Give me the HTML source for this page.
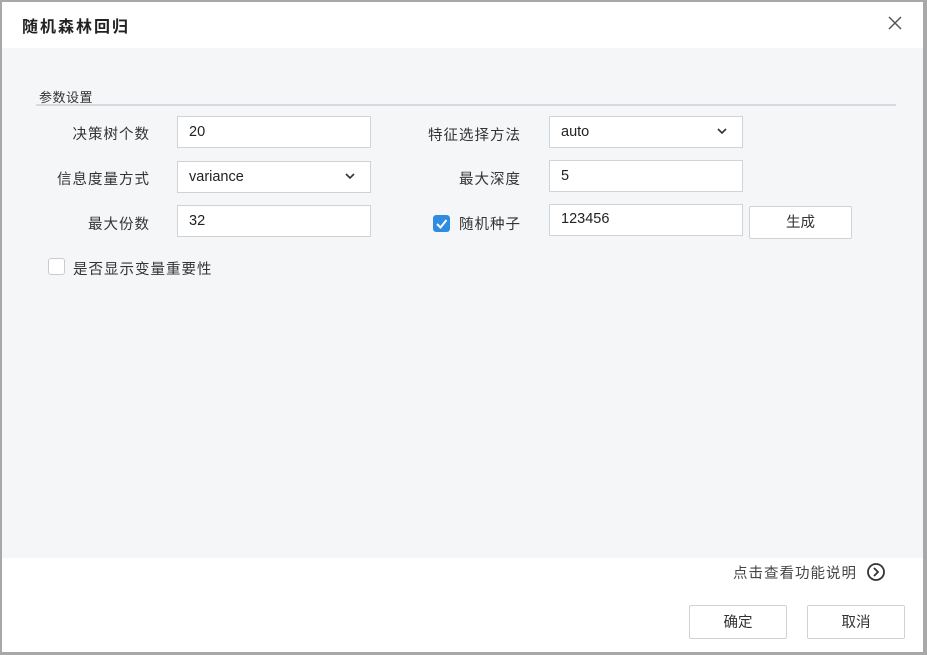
<!DOCTYPE html>
<html><head><meta charset="utf-8"><style>
*{box-sizing:border-box;margin:0;padding:0}
body{width:927px;height:655px;position:relative;background:#fff;font-family:"Liberation Sans","Noto Sans CJK SC",sans-serif;font-size:14px;color:#333;overflow:hidden}
.frame{position:absolute;inset:0;border:2px solid #a8a8a8;border-right-width:4px;border-bottom-width:3px;pointer-events:none}
.title{position:absolute;left:22px;top:13px;font-size:16px;letter-spacing:2px;font-weight:bold;color:#222}
.close{position:absolute;left:886px;top:14px}
.body{position:absolute;left:2px;top:48px;width:921px;height:510px;background:#f5f6f8}
.sec{position:absolute;left:39px;top:87px;font-size:13px;letter-spacing:0.5px;color:#333}
.line{position:absolute;left:36px;top:104px;width:860px;height:2px;background:#d6dae0}
.lbl{position:absolute;font-size:14.5px;letter-spacing:1px;color:#333;text-align:right}
.in{position:absolute;height:32px;background:#fff;border:1px solid #cfd3d8;padding-left:11px;line-height:30px;font-size:14.5px;color:#222}
.arr{position:absolute;right:14px;top:8px}
.cb{position:absolute;width:17px;height:17px;border-radius:3px}
.btn{position:absolute;background:#fff;border:1px solid #cfd3d8;border-radius:2px;text-align:center;font-size:14.5px;color:#333}
</style></head><body>
<div class="title">随机森林回归</div>
<svg class="close" width="18" height="18" viewBox="0 0 18 18"><path d="M3 3L15 15M15 3L3 15" stroke="#555" stroke-width="1.5"/></svg>
<div class="body"></div>
<div class="sec">参数设置</div>
<div class="line"></div>

<div class="lbl" style="left:40px;top:123px;width:110px">决策树个数</div>
<div class="in" style="left:177px;top:116px;width:194px">20</div>
<div class="lbl" style="left:30px;top:168px;width:120px">信息度量方式</div>
<div class="in" style="left:177px;top:161px;width:194px">variance<svg class="arr" width="12" height="12" viewBox="0 0 12 12"><path d="M2 4L6 8L10 4" stroke="#333" stroke-width="1.6" fill="none"/></svg></div>
<div class="lbl" style="left:40px;top:213px;width:110px">最大份数</div>
<div class="in" style="left:177px;top:205px;width:194px">32</div>

<div class="lbl" style="left:390px;top:124px;width:131px">特征选择方法</div>
<div class="in" style="left:549px;top:116px;width:194px">auto<svg class="arr" width="12" height="12" viewBox="0 0 12 12"><path d="M2 4L6 8L10 4" stroke="#333" stroke-width="1.6" fill="none"/></svg></div>
<div class="lbl" style="left:410px;top:168px;width:111px">最大深度</div>
<div class="in" style="left:549px;top:160px;width:194px">5</div>
<svg class="cb" style="left:433px;top:215px" viewBox="0 0 17 17"><rect width="17" height="17" rx="3" fill="#2f8ce0"/><path d="M4 9L7.5 12.5L13.5 5" stroke="#fff" stroke-width="2" fill="none"/></svg>
<div class="lbl" style="left:455px;top:213px;width:66px">随机种子</div>
<div class="in" style="left:549px;top:204px;width:194px;line-height:28px">123456</div>
<div class="btn" style="left:749px;top:206px;width:103px;height:33px;line-height:33px">生成</div>

<div class="cb" style="left:48px;top:258px;background:#fff;border:1px solid #c8ccd2"></div>
<div class="lbl" style="left:73px;top:258px;text-align:left">是否显示变量重要性</div>

<div class="lbl" style="left:733px;top:562px;text-align:left;color:#444">点击查看功能说明</div>
<svg style="position:absolute;left:866px;top:562px" width="20" height="20" viewBox="0 0 20 20"><circle cx="10" cy="10" r="8" stroke="#333" stroke-width="1.8" fill="none"/><path d="M8 6L12 10L8 14" stroke="#333" stroke-width="1.8" fill="none"/></svg>
<div class="btn" style="left:689px;top:605px;width:98px;height:34px;line-height:34px">确定</div>
<div class="btn" style="left:807px;top:605px;width:98px;height:34px;line-height:34px">取消</div>
<div class="frame"></div>
</body></html>
